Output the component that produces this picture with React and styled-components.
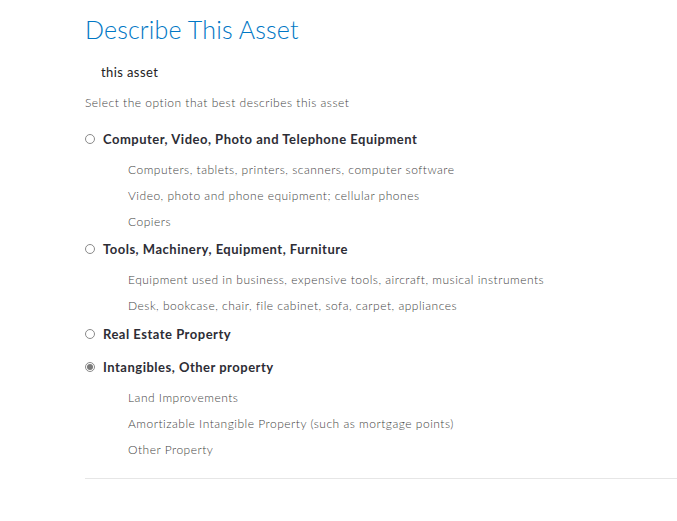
import React from "react";
import styled, { createGlobalStyle } from "styled-components";

const Global = createGlobalStyle`
  html, body { margin: 0; padding: 0; background: #fff; }
  body { font-family: Lato, "Open Sans", sans-serif; }
`;

const Page = styled.div`
  padding: 13px 0 0 85px;
  width: 592px;
`;

const Title = styled.h1`
  margin: 0;
  font-size: 25px;
  line-height: 32px;
  font-weight: 300;
  color: #0077c5;
  letter-spacing: 0.15px;
`;

const Subject = styled.div`
  margin: 18px 0 0 16px;
  font-size: 13px;
  line-height: 18px;
  color: #222;
  letter-spacing: 0.4px;
`;

const Hint = styled.div`
  margin-top: 14px;
  font-size: 12px;
  line-height: 16px;
  font-weight: 300;
  color: #444;
  letter-spacing: 0.5px;
`;

const Options = styled.div`
  margin-top: 18px;
  display: flex;
  flex-direction: column;
`;

const Group = styled.div`
  display: flex;
  flex-direction: column;
  margin-bottom: ${(p) => (p.$hasSubs ? "4.4px" : "13.6px")};
`;

const OptionRow = styled.label`
  display: flex;
  align-items: center;
  height: 20px;
  gap: 8px;
  font-size: 13px;
  font-weight: 700;
  color: #2d2d35;
  letter-spacing: 0.5px;
`;

const Radio = styled.span`
  box-sizing: border-box;
  width: 10px;
  height: 10px;
  border-radius: 50%;
  border: 1px solid #8a8a8a;
  display: flex;
  align-items: center;
  justify-content: center;
  &::after {
    content: "";
    width: 6px;
    height: 6px;
    border-radius: 50%;
    background: ${(p) => (p.$checked ? "#7a7a7a" : "transparent")};
  }
`;

const SubList = styled.ul`
  list-style: none;
  margin: 8px 0 0 43px;
  padding: 0;
`;

const SubItem = styled.li`
  height: 26px;
  line-height: 26px;
  font-size: 12px;
  font-weight: 300;
  color: #444;
  letter-spacing: 0.5px;
`;

const Divider = styled.hr`
  margin: 10px 0 0;
  border: none;
  border-top: 1px solid #e6e6e6;
`;

const data = [
  {
    label: "Computer, Video, Photo and Telephone Equipment",
    subs: [
      "Computers, tablets, printers, scanners, computer software",
      "Video, photo and phone equipment; cellular phones",
      "Copiers",
    ],
  },
  {
    label: "Tools, Machinery, Equipment, Furniture",
    subs: [
      "Equipment used in business, expensive tools, aircraft, musical instruments",
      "Desk, bookcase, chair, file cabinet, sofa, carpet, appliances",
    ],
  },
  { label: "Real Estate Property", subs: [] },
  {
    label: "Intangibles, Other property",
    checked: true,
    subs: [
      "Land Improvements",
      "Amortizable Intangible Property (such as mortgage points)",
      "Other Property",
    ],
  },
];

export default function App() {
  return (
    <>
      <Global />
      <Page>
        <Title>Describe This Asset</Title>
        <Subject>this asset</Subject>
        <Hint>Select the option that best describes this asset</Hint>
        <Options>
          {data.map((o) => (
            <Group key={o.label} $hasSubs={o.subs.length > 0}>
              <OptionRow>
                <Radio $checked={o.checked} />
                {o.label}
              </OptionRow>
              {o.subs.length > 0 && (
                <SubList>
                  {o.subs.map((s) => (
                    <SubItem key={s}>{s}</SubItem>
                  ))}
                </SubList>
              )}
            </Group>
          ))}
        </Options>
        <Divider />
      </Page>
    </>
  );
}
